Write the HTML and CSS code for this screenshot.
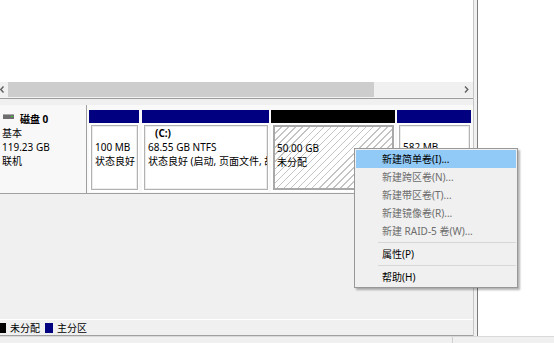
FILE: index.html
```html
<!DOCTYPE html>
<html>
    <head>
        <meta charset="utf-8" />
        <title>磁盘管理</title>
        <link rel="stylesheet" href="styles.css">
    </head>
    <body>
        <div class="window">
            <div class="main">
                <div class="panes">
                    <div class="list">
                        <div class="list-body"></div>
                        <div class="hscroll">
                            <span class="arrow arrow-left">
                                <svg width="7" height="15" viewBox="0 0 7 15"><path d="M3.5 4.5 L0.8 7.5 L3.5 10.5" fill="none" stroke="#606060" stroke-width="1.4"/></svg>
                            </span>
                            <span class="thumb"></span>
                            <span class="track"></span>
                            <span class="arrow arrow-right">
                                <svg width="14" height="15" viewBox="0 0 14 15"><path d="M6 4.5 L8.8 7.5 L6 10.5" fill="none" stroke="#606060" stroke-width="1.4"/></svg>
                            </span>
                        </div>
                    </div>
                    <div class="lower">
                        <div class="disk">
                            <div class="disk-label">
                                <div class="disk-name">
                                    <svg class="drive" width="11" height="6" viewBox="0 0 11 6">
                                        <rect x="0" y="0" width="11" height="5" fill="#6e6e6e"/>
                                        <rect x="0" y="0" width="11" height="1" fill="#a8a8a8"/>
                                        <rect x="8" y="2" width="2" height="1" fill="#3fbf3f"/>
                                    </svg>磁盘 0
                                </div>
                                <div>基本</div>
                                <div>119.23 GB</div>
                                <div>联机</div>
                            </div>
                            <div class="parts">
                                <div class="part part-sys">
                                    <div class="bar"></div>
                                    <div class="box">
                                        <div>&nbsp;</div>
                                        <div>100 MB</div>
                                        <div>状态良好</div>
                                    </div>
                                </div>
                                <div class="part part-c">
                                    <div class="bar"></div>
                                    <div class="box">
                                        <div class="vol">(C:)</div>
                                        <div>68.55 GB NTFS</div>
                                        <div>状态良好 (启动, 页面文件, 故障转储, 主分区)</div>
                                    </div>
                                </div>
                                <div class="part part-free">
                                    <div class="bar"></div>
                                    <div class="box">
                                        <div>&nbsp;</div>
                                        <div>50.00 GB</div>
                                        <div>未分配</div>
                                    </div>
                                </div>
                                <div class="part part-rec">
                                    <div class="bar"></div>
                                    <div class="box">
                                        <div>&nbsp;</div>
                                        <div>582 MB</div>
                                    </div>
                                </div>
                            </div>
                        </div>
                        <div class="legend">
                            <span class="swatch swatch-free"></span><span class="legend-text">未分配</span>
                            <span class="swatch swatch-primary"></span><span class="legend-text">主分区</span>
                        </div>
                    </div>
                </div>
                <div class="splitter"></div>
                <div class="side"></div>
            </div>
            <div class="status"><span class="status-cell"></span></div>

            <div class="menu">
                <div class="item active">新建简单卷(I)...</div>
                <div class="item disabled">新建跨区卷(N)...</div>
                <div class="item disabled">新建带区卷(T)...</div>
                <div class="item disabled">新建镜像卷(R)...</div>
                <div class="item disabled">新建 RAID-5 卷(W)...</div>
                <div class="sep"></div>
                <div class="item">属性(P)</div>
                <div class="sep"></div>
                <div class="item">帮助(H)</div>
            </div>
        </div>
    </body>
</html>
```

FILE: styles.css
```css
* {
	box-sizing: border-box;
}

body {
	margin: 0;
	background: #ffffff;
	color: #000000;
	font: 10px/14px "Noto Sans", "Noto Sans CJK SC", sans-serif;
	overflow: hidden;
}

.window {
	position: relative;
	width: 554px;
	height: 343px;
	display: flex;
	flex-direction: column;
}

.main {
	flex: 1;
	display: flex;
	min-height: 0;
}

.panes {
	width: 474px;
	flex: none;
	border-right: 1px solid #c6c6c6;
	display: flex;
	flex-direction: column;
}

.splitter {
	width: 4px;
	flex: none;
	background: #f0f0f0;
	border-right: 1px solid #7c7c7c;
}

.side {
	flex: 1;
	background: #ffffff;
}

/* upper list view */
.list {
	height: 99px;
	flex: none;
	background: #ffffff;
	border-bottom: 1px solid #9c9c9c;
	display: flex;
	flex-direction: column;
}

.list-body {
	flex: 1;
}

.hscroll {
	height: 16px;
	background: #f0f0f0;
	border-bottom: 1px solid #f4f4f4;
	display: flex;
}

.arrow {
	display: flex;
	align-items: center;
	flex: none;
}

.thumb {
	width: 366px;
	flex: none;
	margin-left: 1px;
	background: #cdcdcd;
}

.track {
	flex: 1;
}

/* lower graphical view */
.lower {
	flex: 1;
	background: #f0f0f0;
	display: flex;
	flex-direction: column;
}

.disk {
	height: 89px;
	margin-top: 6px;
	display: flex;
}

.disk-label {
	width: 87px;
	flex: none;
	padding: 7px 0 0 2px;
	background: #f8f8f8;
	border-right: 1px solid #a0a0a0;
	border-bottom: 1px solid #a0a0a0;
}

.disk-name {
	font-weight: bold;
	padding-left: 1px;
}

.drive {
	vertical-align: 3px;
	margin-right: 6px;
}

.parts {
	flex: 1;
	min-width: 0;
	display: flex;
	padding: 5px 2px 1px 2px;
	background: #f9f9f9;
	border-bottom: 1px solid #a0a0a0;
}

.part {
	display: flex;
	flex-direction: column;
	flex: none;
	background: #ffffff;
	margin-right: 2px;
	min-width: 0;
}

.part-sys {
	width: 50px;
	margin-right: 3px;
}

.part-c {
	width: 127px;
}

.part-free {
	width: 124px;
}

.part-rec {
	flex: 1;
	margin-right: 0;
}

.bar {
	height: 13px;
	background: #000080;
}

.part-free .bar {
	background: #000000;
}

.box {
	flex: 1;
	margin: 2px 1px 2px 2px;
	padding: 0 0 0 3px;
	border: 1px solid #b2b2b2;
	box-shadow: inset 0 0 0 1px #ececec;
	white-space: nowrap;
	overflow: hidden;
}

.vol {
	font-weight: bold;
	margin-left: 7px;
}

.part-free .box {
	border: 2px solid #a9a9a9;
	padding-left: 2px;
	box-shadow: none;
	background: repeating-linear-gradient(135deg, #ffffff 0, #ffffff 4px, #c4c4c4 4px, #c4c4c4 5px);
}

.legend {
	margin-top: auto;
	height: 17px;
	border-top: 1px solid #ffffff;
	border-bottom: 1px solid #a0a0a0;
	display: flex;
	align-items: center;
}

.swatch {
	width: 8px;
	height: 10px;
	margin-right: 4px;
}

.swatch-free {
	background: #000000;
	margin-left: -2px;
}

.swatch-primary {
	background: #000080;
}

.legend-text {
	margin-right: 5px;
}

.status {
	height: 7px;
	flex: none;
	background: #f0f0f0;
	border-top: 1px solid #dadada;
}

.status-cell {
	display: block;
	width: 453px;
	height: 100%;
	border-right: 1px solid #d0d0d0;
}

/* context menu */
.menu {
	position: absolute;
	left: 354px;
	top: 148px;
	width: 164px;
	padding: 1px;
	background: #f0f0f0;
	border: 1px solid #989898;
	box-shadow: 2px 2px 2px rgba(0, 0, 0, 0.3);
}

.item {
	height: 18px;
	line-height: 18px;
	padding-left: 26px;
	white-space: nowrap;
}

.item.active {
	background: #91c9f7;
}

.item.disabled {
	color: #6d6d6d;
}

.sep {
	margin: 2px 0 2px 22px;
	border-top: 1px solid #d7d7d7;
}
```
